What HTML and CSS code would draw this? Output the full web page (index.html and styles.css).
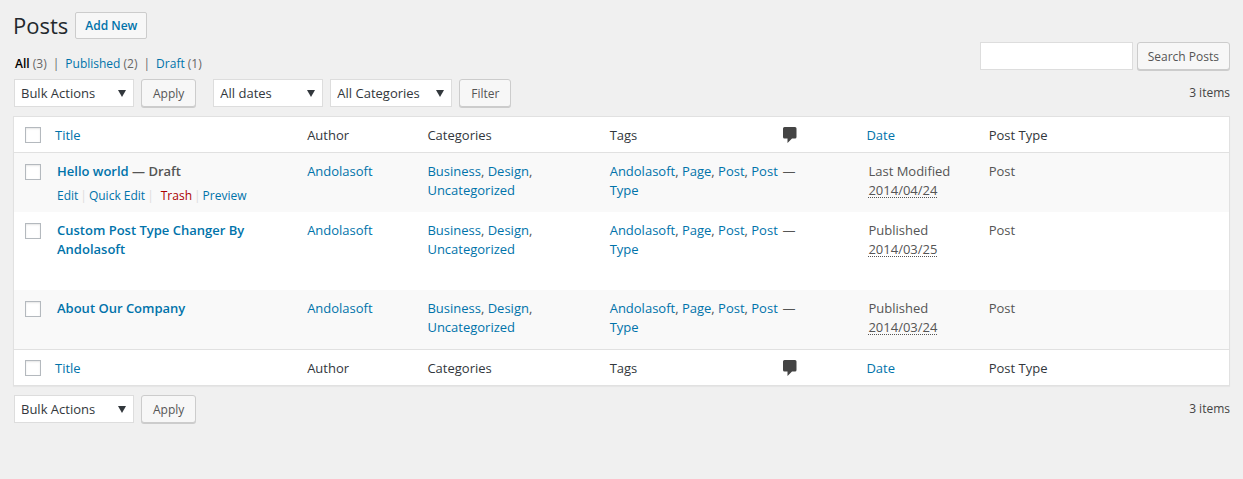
FILE: index.html
```html
<!DOCTYPE html>
<html lang="en">
<head>
<meta charset="utf-8">
<title>Posts</title>
<link rel="stylesheet" href="styles.css">
</head>
<body>
<svg class="sprite" aria-hidden="true">
  <symbol id="bubble" viewBox="0 0 14 16"><path d="M1.500 0h10.500q1.500 0 1.500 1.500v8.500q0 1.500-1.500 1.500H9L4.500 16v-4.500h-3Q0 11.500 0 10V1.500Q0 0 1.500 0z"/></symbol>
</svg>
<main class="page">
  <header class="heading">
    <h1 class="title">Posts</h1>
    <a class="add-new" href="#">Add New</a>
  </header>

  <div class="toolbar">
    <nav class="views">
      <a class="current" href="#">All</a> <span>(3)</span><span class="bar">|</span><a href="#">Published</a> <span>(2)</span><span class="bar">|</span><a href="#">Draft</a> <span>(1)</span>
    </nav>
    <form class="search">
      <input class="search-input" type="search" aria-label="Search Posts">
      <button class="button" type="button">Search Posts</button>
    </form>
  </div>

  <div class="tablenav">
    <div class="group">
      <span class="select bulk"><select aria-label="Bulk action"><option>Bulk Actions</option></select></span>
      <button class="button" type="button">Apply</button>
    </div>
    <div class="group">
      <span class="select dates"><select aria-label="Filter by date"><option>All dates</option></select></span>
      <span class="select cats"><select aria-label="Filter by category"><option>All Categories</option></select></span>
      <button class="button" type="button">Filter</button>
    </div>
    <span class="count">3 items</span>
  </div>

  <table class="posts">
    <thead>
      <tr>
        <th class="col-check"><input type="checkbox" aria-label="Select all"></th>
        <th class="sortable"><a href="#">Title</a></th>
        <th class="col-author">Author</th>
        <th class="col-cats">Categories</th>
        <th class="col-tags">Tags</th>
        <th class="col-comments"><svg class="bubble" role="img" aria-label="Comments"><use href="#bubble"/></svg></th>
        <th class="col-date sortable"><a href="#">Date</a></th>
        <th class="col-type">Post Type</th>
      </tr>
    </thead>
    <tbody>
      <tr>
        <td class="col-check"><input type="checkbox" aria-label="Select Hello world"></td>
        <td>
          <strong class="post-title"><a href="#">Hello world</a> — Draft</strong>
          <div class="actions"><a href="#">Edit</a><i>|</i><a href="#">Quick Edit</a><i>|</i><a class="trash" href="#">Trash</a><i>|</i><a href="#">Preview</a></div>
        </td>
        <td><a href="#">Andolasoft</a></td>
        <td><a href="#">Business</a>, <a href="#">Design</a>, <a href="#">Uncategorized</a></td>
        <td class="col-tags"><a href="#">Andolasoft</a>, <a href="#">Page</a>, <a href="#">Post</a>, <a href="#">Post Type</a></td>
        <td class="col-comments">—</td>
        <td>Last Modified<br><abbr>2014/04/24</abbr></td>
        <td>Post</td>
      </tr>
      <tr>
        <td class="col-check"><input type="checkbox" aria-label="Select Custom Post Type Changer By Andolasoft"></td>
        <td>
          <strong class="post-title"><a href="#">Custom Post Type Changer By Andolasoft</a></strong>
          <div class="actions"></div>
        </td>
        <td><a href="#">Andolasoft</a></td>
        <td><a href="#">Business</a>, <a href="#">Design</a>, <a href="#">Uncategorized</a></td>
        <td class="col-tags"><a href="#">Andolasoft</a>, <a href="#">Page</a>, <a href="#">Post</a>, <a href="#">Post Type</a></td>
        <td class="col-comments">—</td>
        <td>Published<br><abbr>2014/03/25</abbr></td>
        <td>Post</td>
      </tr>
      <tr>
        <td class="col-check"><input type="checkbox" aria-label="Select About Our Company"></td>
        <td>
          <strong class="post-title"><a href="#">About Our Company</a></strong>
          <div class="actions"></div>
        </td>
        <td><a href="#">Andolasoft</a></td>
        <td><a href="#">Business</a>, <a href="#">Design</a>, <a href="#">Uncategorized</a></td>
        <td class="col-tags"><a href="#">Andolasoft</a>, <a href="#">Page</a>, <a href="#">Post</a>, <a href="#">Post Type</a></td>
        <td class="col-comments">—</td>
        <td>Published<br><abbr>2014/03/24</abbr></td>
        <td>Post</td>
      </tr>
    </tbody>
    <tfoot>
      <tr>
        <th class="col-check"><input type="checkbox" aria-label="Select all"></th>
        <th class="sortable"><a href="#">Title</a></th>
        <th>Author</th>
        <th>Categories</th>
        <th>Tags</th>
        <th class="col-comments"><svg class="bubble" role="img" aria-label="Comments"><use href="#bubble"/></svg></th>
        <th class="sortable"><a href="#">Date</a></th>
        <th>Post Type</th>
      </tr>
    </tfoot>
  </table>

  <div class="tablenav">
    <div class="group">
      <span class="select bulk"><select aria-label="Bulk action"><option>Bulk Actions</option></select></span>
      <button class="button" type="button">Apply</button>
    </div>
    <span class="count">3 items</span>
  </div>
</main>
</body>
</html>
```

FILE: styles.css
```css
* {
  box-sizing: border-box;
}

body {
  margin: 0;
  background: #f0f0f0;
  color: #555;
  font: 13px/19px "Open Sans", "Noto Sans", sans-serif;
}

a {
  color: #0073aa;
  text-decoration: none;
}

.sprite {
  display: none;
}

.page {
  padding: 11px 13px 0;
}

.heading {
  display: flex;
  align-items: center;
  gap: 7px;
  height: 28px;
}

.title {
  margin: 0;
  color: #23282d;
  font-size: 22px;
  font-weight: 400;
  line-height: 28px;
}

.add-new {
  padding: 3px 9px;
  border: 1px solid #ccc;
  border-radius: 2px;
  background: #f7f7f7;
  font-size: 12px;
  font-weight: 600;
}

.toolbar {
  display: flex;
  justify-content: space-between;
  align-items: flex-end;
  margin-top: 3px;
}

.views {
  padding-left: 2px;
  color: #666;
  font-size: 12px;
  line-height: 13px;
}

.views .current {
  color: #000;
  font-weight: 600;
}

.bar {
  margin: 0 6px;
}

.search {
  display: flex;
  gap: 4px;
}

.search-input {
  width: 153px;
  height: 28px;
  border: 1px solid #ddd;
  background: #fff;
  font: inherit;
}

.button {
  height: 28px;
  padding: 0 10px;
  border: 1px solid #ccc;
  border-radius: 3px;
  background: #f7f7f7;
  box-shadow: 0 1px 0 #ccc;
  color: #555;
  font: inherit;
  font-size: 12px;
}

.group .button {
  padding: 0 11px;
}

.tablenav {
  display: flex;
  gap: 17px;
  padding: 9px 0 9px 1px;
}

.group {
  display: flex;
  gap: 7px;
}

.select {
  position: relative;
  height: 28px;
}

.select::after {
  content: "";
  position: absolute;
  top: 11px;
  right: 8px;
  border: 4px solid transparent;
  border-top: 7px solid #32373c;
  border-bottom: 0;
  pointer-events: none;
}

.select select {
  appearance: none;
  width: 100%;
  height: 28px;
  padding: 0 6px;
  border: 1px solid #ddd;
  border-radius: 0;
  background: #fff;
  color: #32373c;
  font: inherit;
}

.bulk {
  width: 120px;
}

.dates {
  width: 110px;
}

.cats {
  width: 122px;
}

.count {
  margin-left: auto;
  color: #444;
  font-size: 12px;
  line-height: 28px;
}

.posts {
  width: 100%;
  table-layout: fixed;
  border: 1px solid #e1e1e1;
  border-spacing: 0;
  background: #fff;
  box-shadow: 0 1px 1px rgba(0, 0, 0, 0.04);
}

.posts th {
  height: 36px;
  padding: 1px 10px 0;
  color: #32373c;
  font-weight: 400;
  text-align: left;
}

.posts thead th {
  border-bottom: 1px solid #e1e1e1;
}

.posts tfoot th {
  border-top: 1px solid #e1e1e1;
}

.posts th.sortable {
  padding-left: 8px;
}

.posts td {
  padding: 9px 10px 7px;
  vertical-align: top;
}

.posts tbody tr:nth-child(odd) {
  background: #f9f9f9;
}

.posts .col-check {
  width: 33px;
  padding-right: 0;
}

.col-author,
.col-date {
  width: 9.9%;
}

.col-cats {
  width: 15%;
}

.posts .col-tags {
  width: 14.8%;
  padding-right: 0;
}

.posts .col-comments {
  width: 6.5%;
  padding-left: 3px;
}

.col-type {
  width: 20.6%;
}

.posts input {
  appearance: none;
  display: block;
  width: 16px;
  height: 16px;
  margin: 0 0 0 1px;
  border: 1px solid #b4b9be;
  background: #fff;
  box-shadow: inset 0 1px 2px rgba(0, 0, 0, 0.1);
}

.posts td input {
  margin-top: 2px;
}

.bubble {
  display: block;
  width: 14px;
  height: 16px;
  margin-left: 1px;
  fill: #444;
}

.post-title {
  display: block;
  font-weight: 600;
}

.actions {
  min-height: 24px;
  padding-top: 5px;
  font-size: 12px;
  white-space: nowrap;
}

.actions i {
  margin: 0 2px;
  color: #ddd;
  font-style: normal;
}

.actions .trash {
  margin-left: 5px;
  color: #a00;
}

abbr {
  text-decoration: underline dotted 1px;
  text-underline-offset: 2px;
}
```
